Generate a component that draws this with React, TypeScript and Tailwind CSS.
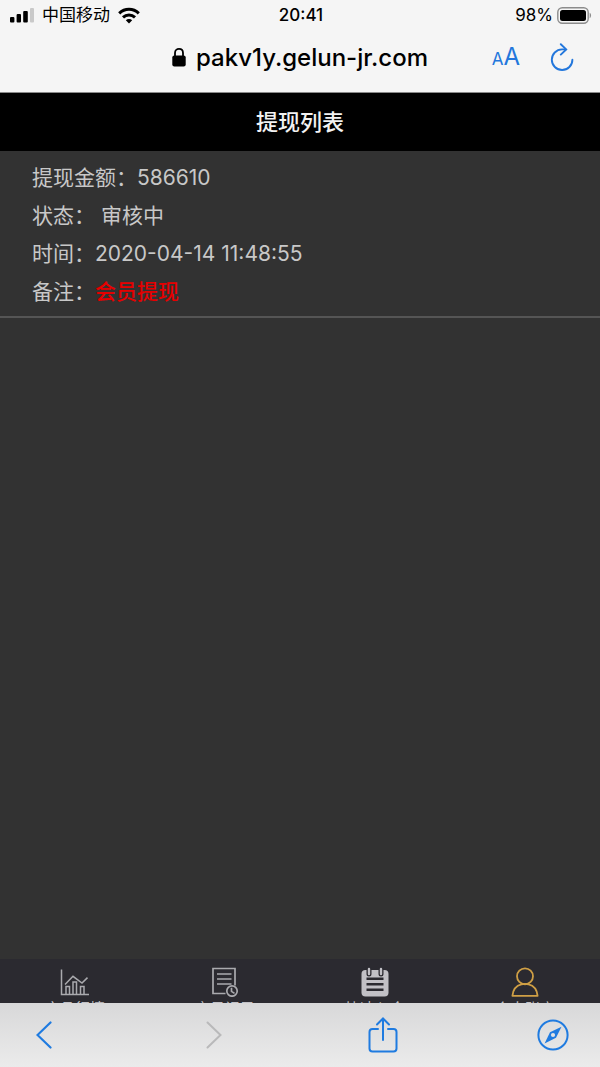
import React from "react";

const records = [
  {
    amount: "586610",
    status: "审核中",
    time: "2020-04-14 11:48:55",
    remark: "会员提现",
  },
];

const StatusBar: React.FC = () => {
  return (
    <div className="grid h-8 grid-cols-3 items-center pl-[10px] pr-2 text-[17px]">
      <div className="flex items-center gap-2">
        <svg width="24" height="16" viewBox="0 0 24 16">
          <rect x="0" y="9" width="4.4" height="5.5" rx="1" />
          <rect x="6.6" y="6" width="4.4" height="8.5" rx="1" />
          <rect x="13.2" y="3" width="4.6" height="11.5" rx="1" />
          <rect x="20" y="0" width="4" height="14.5" rx="1" fill="#c9c9c9" />
        </svg>
        <span className="whitespace-nowrap">中国移动</span>
        <svg width="22" height="19" viewBox="0 0 22 19" fill="none" stroke="#000" strokeWidth="3">
          <path d="M1.2 6.3C6.8.9 15.2.9 20.8 6.3" />
          <path d="M5 10.3c3.4-3.2 8.6-3.2 12 0" />
          <path d="M11 16.4l-3.2-3.2c1.8-1.6 4.6-1.6 6.4 0z" fill="#000" stroke="none" />
        </svg>
      </div>
      <span className="text-center font-medium">20:41</span>
      <div className="flex items-center justify-end gap-1">
        <span>98%</span>
        <svg width="35" height="19" viewBox="0 0 35 19">
          <rect x=".8" y=".8" width="30.4" height="15.4" rx="4.5" fill="none" stroke="#8c8c8c" strokeWidth="1.4" />
          <rect x="3" y="3" width="26" height="11" rx="2.5" />
          <path d="M32.7 5.8c1.8.8 1.8 4.6 0 5.4z" fill="#8c8c8c" />
        </svg>
      </div>
    </div>
  );
};

const AddressBar: React.FC = () => {
  return (
    <div className="relative flex h-[60px] items-center justify-center pb-2">
      <div className="flex items-center gap-[10px]">
        <svg width="14" height="20" viewBox="0 0 14 20">
          <rect x=".3" y="7.5" width="13.4" height="11" rx="2" />
          <path d="M3 8.5V5C3-.4 11-.4 11 5v3.5" fill="none" stroke="#000" strokeWidth="1.8" />
        </svg>
        <span className="text-2xl font-medium">pakv1y.gelun-jr.com</span>
      </div>
      <div className="absolute right-[26px] top-0 flex h-[50px] items-center gap-[30px] text-[#2377dc]">
        <button aria-label="网站设置" className="flex items-baseline leading-6">
          <span className="text-[17px]">A</span>
          <span className="text-2xl">A</span>
        </button>
        <button aria-label="刷新">
          <svg width="24" height="28" viewBox="0 0 24 28" fill="none" stroke="currentColor" strokeWidth="1.9" strokeLinecap="round">
            <path d="M15.5 6.4H12A10.3 10.3 0 1 0 22.4 16.7" />
            <path d="M10.8 1.2l5.4 5.2-5.4 5.2" />
          </svg>
        </button>
      </div>
    </div>
  );
};

const RecordItem: React.FC<(typeof records)[number]> = ({ amount, status, time, remark }) => {
  return (
    <li className="border-b-2 border-[#555] px-8 pb-[5px] pt-2 text-[21px] leading-[38px] text-[#c8c8c8]">
      <p>提现金额：{amount}</p>
      <p>状态： {status}</p>
      <p>时间：{time}</p>
      <p>
        备注：<span className="font-medium text-[#e60000]">{remark}</span>
      </p>
    </li>
  );
};

const ChartIcon = () => (
  <svg width="30" height="30" viewBox="0 0 30 30" fill="none" stroke="currentColor" strokeWidth="1.5">
    <path d="M1.5 2.5v25H29" />
    <path d="M5 17.5l8-8.2 9 6.8 5.5-5.5" />
    <path d="M6 27v-7.5h3.5V27M13 27V15h3.5v12M20.5 27v-7.5H24V27" />
  </svg>
);

const OrderIcon = () => (
  <svg width="30" height="30" viewBox="0 0 30 30" fill="none" stroke="currentColor" strokeWidth="1.7">
    <path d="M15.5 26.5H3V1.5h22v17" />
    <path d="M7 7h14.5M7 12h14.5M7 17h14.5" />
    <circle cx="22" cy="24" r="5.2" />
    <path d="M21.5 20.8v3.6l3 2" />
  </svg>
);

const NoteIcon = () => (
  <svg width="30" height="30" viewBox="0 0 30 30">
    <rect x="1.5" y="3" width="27" height="26.5" rx="4" fill="currentColor" />
    <path d="M6.5 11.8h17M6.5 17.3h17M6.5 22.8h17" stroke="#2b2a30" strokeWidth="2.6" />
    <path d="M9 1v6M21 1v6" stroke="#2b2a30" strokeWidth="5" strokeLinecap="round" />
    <path d="M9 2v5M21 2v5" stroke="currentColor" strokeWidth="2.4" strokeLinecap="round" />
  </svg>
);

const UserIcon = () => (
  <svg width="30" height="30" viewBox="0 0 30 30" fill="none" stroke="currentColor" strokeWidth="1.8">
    <circle cx="15" cy="9.3" r="8" />
    <path d="M2.4 28.8c.6-6.2 4-10.3 9-11.5 2.2-.5 5-.5 7.2 0 5 1.2 8.4 5.3 9 11.5z" strokeLinejoin="round" />
  </svg>
);

const tabs = [
  { label: "产品行情", icon: <ChartIcon />, color: "text-[#aaaaae]" },
  { label: "交易记录", icon: <OrderIcon />, color: "text-[#aaaaae]" },
  { label: "快速入金", icon: <NoteIcon />, color: "text-[#c2c1c6]" },
  { label: "个人账户", icon: <UserIcon />, color: "text-[#cf9f45]" },
];

const TabBar: React.FC = () => {
  return (
    <nav className="grid h-11 grid-cols-4 overflow-hidden bg-[#2b2a30]">
      {tabs.map((tab) => (
        <a key={tab.label} href="#" className={`flex flex-col items-center pt-2 ${tab.color}`}>
          {tab.icon}
          <span className="mt-[2px] text-[15px] leading-5 text-[#c2c1c6]">{tab.label}</span>
        </a>
      ))}
    </nav>
  );
};

const BrowserToolbar: React.FC = () => {
  return (
    <footer className="flex h-16 items-center justify-between bg-linear-to-b from-[#d8d8d9] to-[#ebebeb] pl-7 pr-[31px] text-[#1f7be0]">
      <button aria-label="后退" className="flex w-8 justify-center">
        <svg width="16" height="28" viewBox="0 0 16 28" fill="none" stroke="currentColor" strokeWidth="2.2" strokeLinecap="round">
          <path d="M14.5 1.5L1.5 14l13 12.5" />
        </svg>
      </button>
      <button aria-label="前进" disabled className="flex w-8 justify-center text-[#b9b9ba]">
        <svg width="16" height="28" viewBox="0 0 16 28" fill="none" stroke="currentColor" strokeWidth="2" strokeLinecap="round">
          <path d="M1.5 1.5L14.5 14l-13 12.5" />
        </svg>
      </button>
      <button aria-label="分享" className="flex w-8 justify-center">
        <svg width="30" height="36" viewBox="0 0 30 36" fill="none" stroke="currentColor" strokeWidth="2" strokeLinecap="round">
          <path d="M10 12H4.5A3 3 0 0 0 1.5 15v16.5a3 3 0 0 0 3 3h21a3 3 0 0 0 3-3V15a3 3 0 0 0-3-3H20" />
          <path d="M15 23V1.5M9 7.5l6-6 6 6" />
        </svg>
      </button>
      <button aria-label="浏览器" className="flex w-8 justify-center">
        <svg width="32" height="32" viewBox="0 0 32 32" fill="none" stroke="currentColor" strokeWidth="2">
          <circle cx="16" cy="16" r="14.6" />
          <path d="M24.5 7.7L19 18.8 7.6 24.4 13 13.2z" fill="currentColor" stroke="none" />
          <circle cx="16" cy="16" r="2.1" fill="#e2e2e3" stroke="none" />
        </svg>
      </button>
    </footer>
  );
};

const App: React.FC = () => {
  return (
    <div className="flex min-h-screen flex-col bg-[#323232] font-[Inter,'Noto_Sans_CJK_SC',sans-serif] text-black">
      <header className="border-b border-[#8a8a8a] bg-[#f5f5f5]">
        <StatusBar />
        <AddressBar />
      </header>
      <main className="flex-1">
        <h1 className="bg-black text-center text-[22px] font-medium leading-[58px] text-[#f2f2f2]">提现列表</h1>
        <ul>
          {records.map((record) => (
            <RecordItem key={record.time} {...record} />
          ))}
        </ul>
      </main>
      <TabBar />
      <BrowserToolbar />
    </div>
  );
};

export default App;
